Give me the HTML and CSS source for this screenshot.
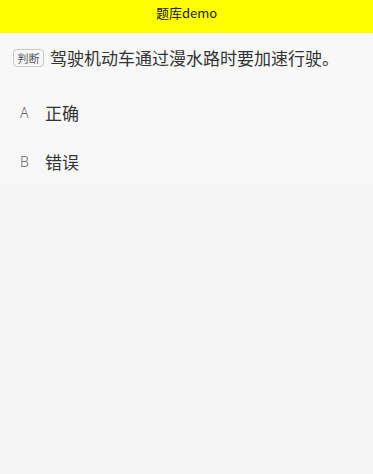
FILE: index.html
```html
<!DOCTYPE html>
<html lang="zh">
<head>
<meta charset="utf-8">
<title>题库demo</title>
<link rel="stylesheet" href="styles.css">
</head>
<body>
<header class="nav">题库demo</header>
<main class="card">
  <div class="question">
    <span class="tag">判断</span><span class="qtext">驾驶机动车通过漫水路时要加速行驶。</span>
  </div>
  <ul class="options">
    <li class="option"><span class="letter">A</span><span class="otext">正确</span></li>
    <li class="option"><span class="letter">B</span><span class="otext">错误</span></li>
  </ul>
</main>
</body>
</html>
```
FILE: styles.css
```css
html, body {
  margin: 0;
  padding: 0;
}
body {
  background: #f5f5f5;
  font-family: "Noto Sans CJK SC", "Noto Sans", sans-serif;
  color: #333;
  min-height: 474px;
}
.nav {
  height: 33px;
  background: #ffff00;
  color: #222;
  font-size: 13px;
  line-height: 25px;
  text-align: center;
}
.card {
  background: #f8f8f8;
  height: 152px;
}
.question {
  display: flex;
  align-items: center;
  padding: 13px 13px 18px 13px;
  height: 24px;
}
.tag {
  display: inline-block;
  box-sizing: border-box;
  height: 18px;
  width: 31px;
  border: 1px solid #c8c8c8;
  border-radius: 4px;
  font-size: 11px;
  line-height: 16px;
  text-align: center;
  color: #555;
  margin-right: 6px;
}
.qtext {
  font-size: 17px;
  line-height: 24px;
  color: #333;
}
.options {
  list-style: none;
  margin: 0;
  padding: 0;
}
.option {
  display: flex;
  align-items: center;
  height: 49px;
  padding-left: 20px;
}
.letter {
  width: 25px;
  font-size: 14px;
  color: #666;
  font-family: "Noto Sans", "Noto Sans CJK SC", sans-serif;
  font-weight: 300;
}
.otext {
  font-size: 17px;
  color: #333;
}
```
